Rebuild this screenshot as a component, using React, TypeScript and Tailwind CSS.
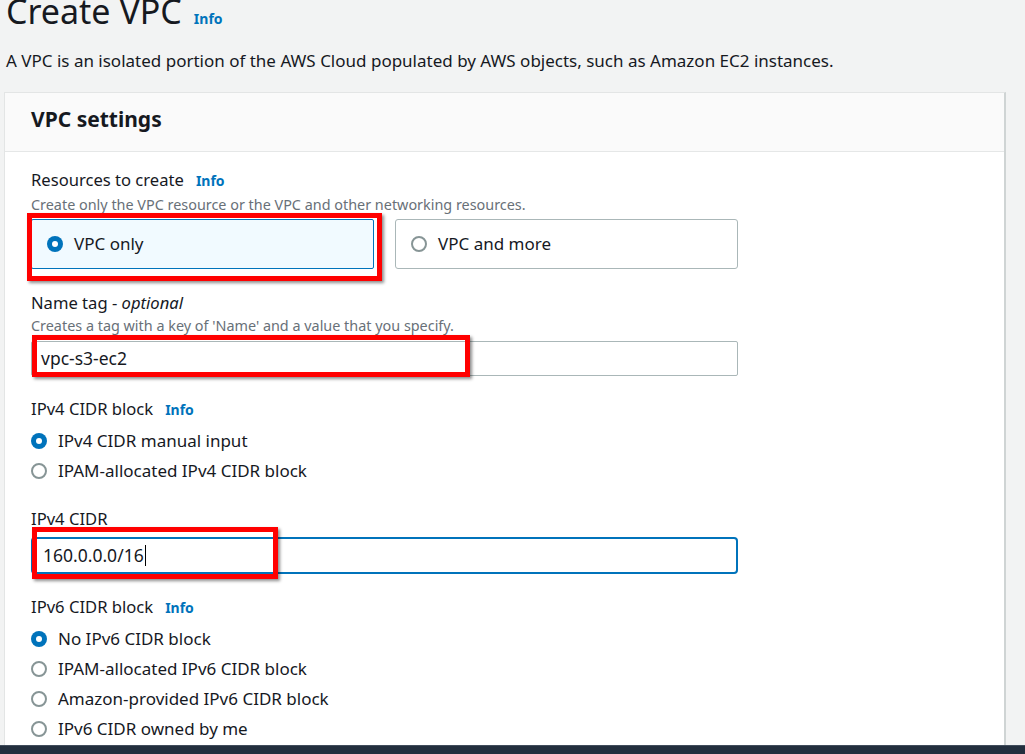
import React from "react";

function Radio({ checked }: { checked?: boolean }) {
  if (checked) {
    return (
      <span className="flex h-[16px] w-[16px] shrink-0 items-center justify-center rounded-full bg-[#0073bb]">
        <span className="h-[6px] w-[6px] rounded-full bg-white" />
      </span>
    );
  }
  return <span className="h-[16px] w-[16px] shrink-0 rounded-full border-2 border-[#879596] bg-white" />;
}

function RadioRow({ label, checked }: { label: string; checked?: boolean }) {
  return (
    <div className="flex h-[30px] items-center gap-[11px]">
      <Radio checked={checked} />
      <span className="text-[17px] text-[#16191f]">{label}</span>
    </div>
  );
}

function Info() {
  return <span className="text-[14px] font-bold text-[#0073bb]">Info</span>;
}

export default function App() {
  return (
    <div className="relative h-[754px] w-[1025px] overflow-hidden bg-[#f2f3f3] font-['Noto_Sans','Open_Sans',sans-serif] text-[#16191f]">
      <div className="h-[745px] overflow-hidden">
        <div className="-mt-[10px] flex items-baseline gap-[12px] pl-[6px]">
          <h1 className="text-[34px] font-normal leading-[42px]">Create VPC</h1>
          <Info />
        </div>
        <p className="mt-[17px] pl-[6px] text-[17px] leading-[24px]">
          A VPC is an isolated portion of the AWS Cloud populated by AWS objects, such as Amazon EC2 instances.
        </p>
        <div className="ml-[4px] mt-[19px] w-[1002px] border-l border-r-2 border-t border-l-[#e3e5e5] border-r-[#cfd4d4] border-t-[#e3e5e5] bg-white">
          <div className="flex h-[59px] items-center border-b border-[#e5e7e7] bg-[#fafafa] pb-[6px] pl-[26px]">
            <h2 className="text-[21px] font-bold leading-[28px]">VPC settings</h2>
          </div>
          <div className="w-[733px] pl-[26px] pt-[17px] pb-[40px]">
            <div className="flex items-baseline gap-[12px] text-[16.6px] leading-[22px]">
              <span>Resources to create</span>
              <Info />
            </div>
            <p className="mt-[4px] text-[14.4px] leading-[18px] text-[#687078]">
              Create only the VPC resource or the VPC and other networking resources.
            </p>
            <div className="mt-[5px] grid grid-cols-2 gap-[21px]">
              <div className="flex h-[50px] items-center gap-[11px] rounded-[2px] border border-[#0073bb] bg-[#f1faff] pl-[15px]">
                <Radio checked />
                <span className="text-[17px]">VPC only</span>
              </div>
              <div className="flex h-[50px] items-center gap-[11px] rounded-[3px] border border-[#aab7b8] bg-white pl-[15px]">
                <Radio />
                <span className="text-[17px]">VPC and more</span>
              </div>
            </div>

            <div className="mt-[23px] text-[16.6px] leading-[22px]">
              Name tag - <span className="italic">optional</span>
            </div>
            <p className="mt-[3px] text-[14.4px] leading-[18px] text-[#687078]">
              Creates a tag with a key of 'Name' and a value that you specify.
            </p>
            <div className="mt-[6px] flex h-[35px] items-center rounded-[2px] border border-[#aab7b8] pl-[9px] text-[17.5px]">
              vpc-s3-ec2
            </div>

            <div className="mt-[22px] flex items-baseline gap-[12px] text-[16.6px] leading-[22px]">
              <span>IPv4 CIDR block</span>
              <Info />
            </div>
            <div className="mt-[5px]">
              <RadioRow label="IPv4 CIDR manual input" checked />
              <RadioRow label="IPAM-allocated IPv4 CIDR block" />
            </div>

            <div className="mt-[22px] text-[16.6px] leading-[22px]">IPv4 CIDR</div>
            <div className="mt-[7px] flex h-[37px] items-center rounded-[4px] border-2 border-[#0073bb] pl-[10px] text-[17.5px]">
              160.0.0.0/16
              <span className="ml-[1px] h-[21px] w-[1px] bg-black" />
            </div>

            <div className="mt-[22px] flex items-baseline gap-[12px] text-[16.6px] leading-[22px]">
              <span>IPv6 CIDR block</span>
              <Info />
            </div>
            <div className="mt-[5px]">
              <RadioRow label="No IPv6 CIDR block" checked />
              <RadioRow label="IPAM-allocated IPv6 CIDR block" />
              <RadioRow label="Amazon-provided IPv6 CIDR block" />
              <RadioRow label="IPv6 CIDR owned by me" />
            </div>
          </div>
        </div>
      </div>
      <div className="h-[9px] border-t border-[#414d5c] bg-[#232f3e]" />

      {/* red annotation boxes */}
      <div className="absolute left-[27px] top-[213px] h-[68px] w-[355px] border-[5px] border-[#ff0000] shadow-[2px_2px_3px_rgba(0,0,0,0.45)]" />
      <div className="absolute left-[32px] top-[335px] h-[42px] w-[438px] border-[5px] border-[#ff0000] shadow-[2px_2px_3px_rgba(0,0,0,0.45)]" />
      <div className="absolute left-[32px] top-[527px] h-[52px] w-[246px] border-[5px] border-[#ff0000] shadow-[2px_2px_3px_rgba(0,0,0,0.45)]" />
    </div>
  );
}
